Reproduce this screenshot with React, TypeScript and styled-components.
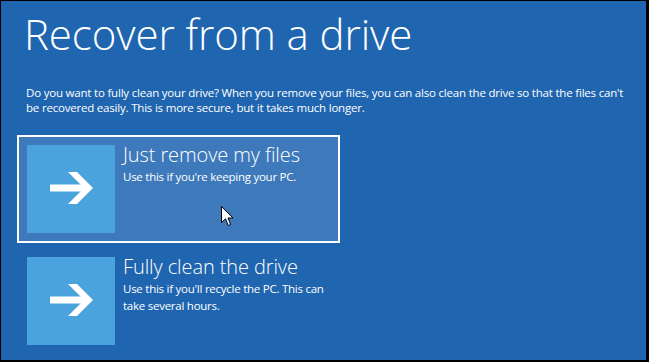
import React from 'react';
import styled, { createGlobalStyle } from 'styled-components';

const GlobalStyle = createGlobalStyle`
  html, body {
    margin: 0;
    padding: 0;
    background: #000;
  }
  body {
    font-family: 'Open Sans', 'Noto Sans', sans-serif;
  }
`;

const Screen = styled.div`
  box-sizing: border-box;
  width: 649px;
  height: 362px;
  border-style: solid;
  border-color: #000;
  border-width: 1px 3px 2px 1px;
  background: #1f65b0;
  color: #fff;
  overflow: hidden;
  position: relative;
`;

const Content = styled.main`
  display: flex;
  flex-direction: column;
  padding: 5px 0 0 23px;
`;

const Title = styled.h1`
  margin: 0;
  font-weight: 300;
  font-size: 42px;
  line-height: 56px;
  letter-spacing: -0.1px;
`;

const Lead = styled.p`
  margin: 23px 0 0 2px;
  width: 604px;
  font-size: 11.5px;
  line-height: 15px;
  letter-spacing: -0.2px;
`;

const Options = styled.div`
  display: flex;
  flex-direction: column;
  gap: 4px;
  margin: 20px 0 0 -7px;
`;

const Option = styled.div<{ $selected?: boolean }>`
  position: relative;
  box-sizing: border-box;
  width: 323px;
  height: 108px;
  display: flex;
  gap: 8px;
  padding: 8px;
  border: 2px solid ${(p) => (p.$selected ? '#fff' : 'transparent')};
  background: ${(p) => (p.$selected ? 'rgba(255, 255, 255, 0.14)' : 'transparent')};
`;

const Tile = styled.div`
  flex: none;
  width: 88px;
  height: 88px;
  background: #4aa3dc;
  display: flex;
  align-items: center;
  justify-content: center;
`;

const Text = styled.div`
  display: flex;
  flex-direction: column;
  width: 206px;
`;

const OptionTitle = styled.div`
  font-weight: 300;
  font-size: 20px;
  line-height: 22px;
  margin-top: -1px;
  letter-spacing: -0.1px;
`;

const OptionNote = styled.div`
  font-size: 11.5px;
  line-height: 17px;
  letter-spacing: -0.25px;
  margin-top: 2px;
`;

const Pointer = styled.svg`
  position: absolute;
  left: 202px;
  top: 69px;
`;

const Arrow = () => (
  <svg width="88" height="88" viewBox="0 0 88 88">
    <rect x="23" y="39.5" width="36" height="7" fill="#fff" />
    <polygon points="41,27 50,27 66,43 50,59 41,59 57,43" fill="#fff" />
  </svg>
);

const options = [
  { title: 'Just remove my files', note: "Use this if you're keeping your PC.", selected: true },
  {
    title: 'Fully clean the drive',
    note: "Use this if you'll recycle the PC. This can take several hours.",
    selected: false,
  },
];

export default function App() {
  return (
    <>
      <GlobalStyle />
      <Screen>
        <Content>
          <Title>Recover from a drive</Title>
          <Lead>
            Do you want to fully clean your drive? When you remove your files, you can also clean the drive
            so that the files can't be recovered easily. This is more secure, but it takes much longer.
          </Lead>
          <Options>
            {options.map((o) => (
              <Option key={o.title} $selected={o.selected}>
                <Tile>
                  <Arrow />
                </Tile>
                <Text>
                  <OptionTitle>{o.title}</OptionTitle>
                  <OptionNote>{o.note}</OptionNote>
                </Text>
                {o.selected && (
                  <Pointer width="13" height="21" viewBox="0 0 13 21">
                    <path
                      d="M0.5 0.5 L0.5 16.5 L4.5 12.8 L7.2 19.5 L9.6 18.5 L7 12 L12 12 Z"
                      fill="#fff"
                      stroke="#000"
                      strokeWidth="1"
                      strokeLinejoin="miter"
                    />
                  </Pointer>
                )}
              </Option>
            ))}
          </Options>
        </Content>
      </Screen>
    </>
  );
}
